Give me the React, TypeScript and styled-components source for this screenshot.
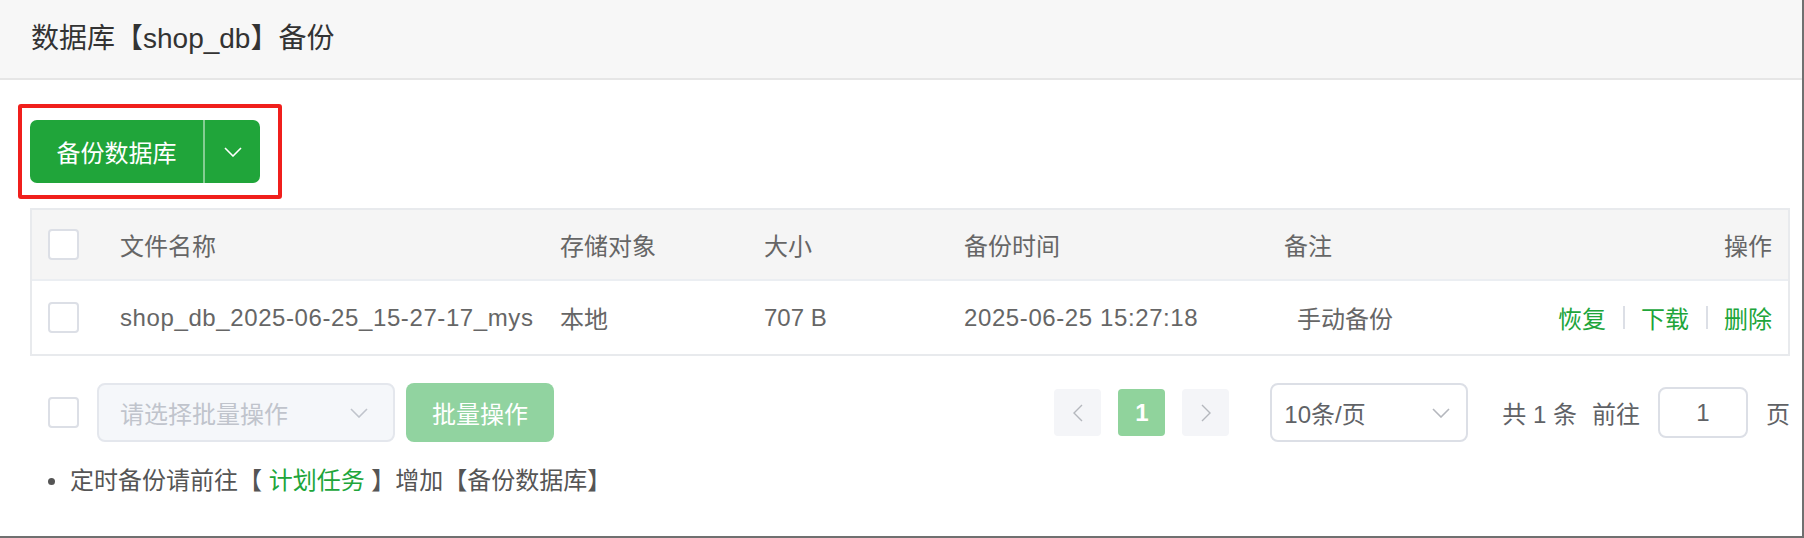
import React from "react";
import styled, { createGlobalStyle } from "styled-components";

const Global = createGlobalStyle`
  html, body { margin: 0; padding: 0; background: #fff; }
  body { font-family: "Liberation Sans", "Noto Sans CJK SC", sans-serif; }
  * { box-sizing: border-box; }
`;

const GREEN = "#20a53a";

const Page = styled.div`
  width: 1804px;
  height: 538px;
  background: #fff;
  border-right: 2px solid #707070;
  border-bottom: 2px solid #707070;
  overflow: hidden;
  font-size: 24px;
  color: #666;
`;

const Header = styled.div`
  height: 80px;
  background: #f7f7f7;
  border-bottom: 2px solid #e6e6e6;
  display: flex;
  align-items: center;
  padding: 0 0 6px 31px;
  font-size: 28px;
  color: #333;
`;

const Content = styled.div`
  padding: 24px 12px 0 30px;
`;

const Highlight = styled.div`
  display: flex;
  width: fit-content;
  margin-left: -12px;
  border: 4px solid #f01f1c;
  border-radius: 3px;
  padding: 12px 18px 12px 8px;
`;

const SplitButton = styled.div`
  display: flex;
  height: 63px;
  border-radius: 7px;
  background: ${GREEN};
  overflow: hidden;
  color: #fff;
`;

const MainPart = styled.div`
  width: 173px;
  display: flex;
  align-items: center;
  justify-content: center;
  font-size: 24px;
`;

const Divider = styled.div`
  width: 2px;
  background: rgba(255, 255, 255, 0.45);
`;

const DropPart = styled.div`
  width: 55px;
  display: flex;
  align-items: center;
  justify-content: center;
`;

const Table = styled.div`
  margin-top: 9px;
  border: 2px solid #e8eaed;
`;

const Row = styled.div<{ $head?: boolean }>`
  display: grid;
  grid-template-columns: 72px 440px 204px 200px 320px 260px 1fr;
  height: ${(p) => (p.$head ? 71 : 73)}px;
  background: ${(p) => (p.$head ? "#f5f5f5" : "#fff")};
  border-bottom: ${(p) => (p.$head ? "2px solid #ebeef2" : "none")};
`;

const Cell = styled.div<{ $right?: boolean; $indent?: number }>`
  display: flex;
  align-items: center;
  justify-content: ${(p) => (p.$right ? "flex-end" : "flex-start")};
  padding-left: ${(p) => 16 + (p.$indent || 0)}px;
  padding-right: ${(p) => (p.$right ? 16 : 0)}px;
  white-space: nowrap;
  overflow: hidden;
  color: #666;
  font-size: 24px;
`;

const Mono = styled.span`
  letter-spacing: 0.6px;
`;

const Checkbox = styled.div`
  width: 31px;
  height: 31px;
  border: 2px solid #dcdfe6;
  border-radius: 4px;
  background: #fff;
  flex: none;
`;

const Link = styled.span`
  color: ${GREEN};
  cursor: pointer;
`;

const Sep = styled.span`
  width: 2px;
  height: 23px;
  background: #dcdfe6;
  margin: 0 16px 0 17px;
`;

const Toolbar = styled.div`
  margin-top: 27px;
  height: 59px;
  display: flex;
  align-items: center;
`;

const ToolCheck = styled(Checkbox)`
  margin-left: 18px;
  margin-right: 18px;
`;

const Select = styled.div<{ $disabled?: boolean; $w: number }>`
  width: ${(p) => p.$w}px;
  height: 59px;
  border: 2px solid ${(p) => (p.$disabled ? "#e4e7ed" : "#dcdfe6")};
  background: ${(p) => (p.$disabled ? "#f5f7fa" : "#fff")};
  border-radius: 8px;
  display: flex;
  align-items: center;
  justify-content: space-between;
  padding: 0 ${(p) => (p.$disabled ? 25 : 16)}px 0 ${(p) => (p.$disabled ? 21 : 12)}px;
  color: ${(p) => (p.$disabled ? "#c0c4cc" : "#606266")};
  font-size: 24px;
`;

const BatchButton = styled.div`
  margin-left: 11px;
  width: 148px;
  height: 59px;
  border-radius: 8px;
  background: #91d3a0;
  color: #fff;
  display: flex;
  align-items: center;
  justify-content: center;
  font-size: 24px;
`;

const Spacer = styled.div`
  flex: 1;
`;

const PageBox = styled.div<{ $active?: boolean; $gap?: number }>`
  width: 47px;
  height: 47px;
  border-radius: 4px;
  background: ${(p) => (p.$active ? "#90d39c" : "#f4f5f8")};
  color: #fff;
  display: flex;
  align-items: center;
  justify-content: center;
  font-size: 24px;
  font-weight: 700;
  margin-right: ${(p) => p.$gap ?? 17}px;
`;

const Label = styled.span<{ $ml?: number }>`
  margin-left: ${(p) => p.$ml || 0}px;
  color: #606266;
  font-size: 24px;
  white-space: pre;
`;

const JumpInput = styled.div`
  margin-left: 18px;
  margin-right: 18px;
  width: 90px;
  height: 51px;
  border: 2px solid #dcdfe6;
  border-radius: 8px;
  display: flex;
  align-items: center;
  justify-content: center;
  color: #606266;
  font-size: 24px;
`;

const Note = styled.ul`
  list-style: none;
  margin: 22px 0 0 0;
  padding: 0;
`;

const NoteItem = styled.li`
  position: relative;
  line-height: 34px;
  padding-left: 40px;
  color: #555;
  font-size: 24px;
  white-space: pre;
  &::before {
    content: "";
    position: absolute;
    left: 18px;
    top: 14px;
    width: 7px;
    height: 7px;
    border-radius: 50%;
    background: #555;
  }
`;

const ChevronDown = ({ color }: { color: string }) => (
  <svg width="18" height="10" viewBox="0 0 18 10">
    <polyline points="1,1 9,9 17,1" fill="none" stroke={color} strokeWidth="1.6" />
  </svg>
);

const ChevronSide = ({ dir }: { dir: "left" | "right" }) => (
  <svg width="10" height="18" viewBox="0 0 10 18">
    <polyline
      points={dir === "left" ? "9,1 1,9 9,17" : "1,1 9,9 1,17"}
      fill="none"
      stroke="#b4b7bd"
      strokeWidth="1.4"
    />
  </svg>
);

export default function App() {
  return (
    <>
      <Global />
      <Page>
        <Header>数据库【shop_db】备份</Header>
        <Content>
          <Highlight>
            <SplitButton>
              <MainPart>备份数据库</MainPart>
              <Divider />
              <DropPart>
                <ChevronDown color="#fff" />
              </DropPart>
            </SplitButton>
          </Highlight>

          <Table>
            <Row $head>
              <Cell>
                <Checkbox />
              </Cell>
              <Cell>文件名称</Cell>
              <Cell>存储对象</Cell>
              <Cell>大小</Cell>
              <Cell>备份时间</Cell>
              <Cell>备注</Cell>
              <Cell $right>操作</Cell>
            </Row>
            <Row>
              <Cell>
                <Checkbox />
              </Cell>
              <Cell>
                <Mono>shop_db_2025-06-25_15-27-17_mys</Mono>
              </Cell>
              <Cell>本地</Cell>
              <Cell>707 B</Cell>
              <Cell>
                <Mono>2025-06-25 15:27:18</Mono>
              </Cell>
              <Cell $indent={13}>手动备份</Cell>
              <Cell $right>
                <Link>恢复</Link>
                <Sep />
                <Link>下载</Link>
                <Sep />
                <Link>删除</Link>
              </Cell>
            </Row>
          </Table>

          <Toolbar>
            <ToolCheck />
            <Select $disabled $w={298}>
              <span>请选择批量操作</span>
              <ChevronDown color="#c0c4cc" />
            </Select>
            <BatchButton>批量操作</BatchButton>
            <Spacer />
            <PageBox>
              <ChevronSide dir="left" />
            </PageBox>
            <PageBox $active>1</PageBox>
            <PageBox $gap={41}>
              <ChevronSide dir="right" />
            </PageBox>
            <Select $w={198}>
              <span>10条/页</span>
              <ChevronDown color="#b4b7bd" />
            </Select>
            <Label $ml={34}>共 1 条</Label>
            <Label $ml={15}>前往</Label>
            <JumpInput>1</JumpInput>
            <Label>页</Label>
          </Toolbar>

          <Note>
            <NoteItem>
              定时备份请前往【 <Link>计划任务</Link> 】增加【备份数据库】
            </NoteItem>
          </Note>
        </Content>
      </Page>
    </>
  );
}
